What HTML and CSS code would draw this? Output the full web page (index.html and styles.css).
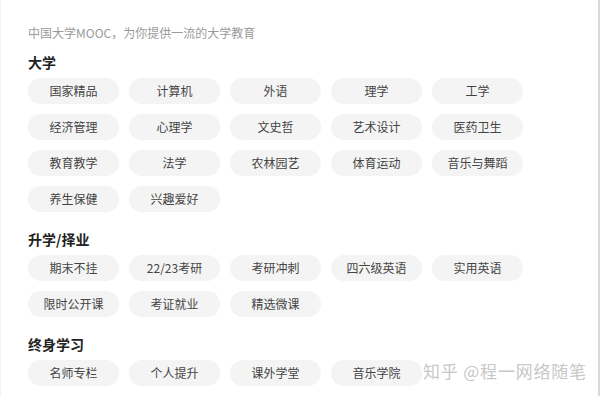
FILE: index.html
```html
<!DOCTYPE html>
<html lang="zh-CN">
<head>
<meta charset="utf-8">
<title>中国大学MOOC</title>
<link rel="stylesheet" href="styles.css">
</head>
<body>
<div class="page">
  <p class="intro">中国大学MOOC，为你提供一流的大学教育</p>

  <section class="group">
    <h2 class="group-title">大学</h2>
    <ul class="tags">
      <li class="tag">国家精品</li>
      <li class="tag">计算机</li>
      <li class="tag">外语</li>
      <li class="tag">理学</li>
      <li class="tag">工学</li>
      <li class="tag">经济管理</li>
      <li class="tag">心理学</li>
      <li class="tag">文史哲</li>
      <li class="tag">艺术设计</li>
      <li class="tag">医药卫生</li>
      <li class="tag">教育教学</li>
      <li class="tag">法学</li>
      <li class="tag">农林园艺</li>
      <li class="tag">体育运动</li>
      <li class="tag">音乐与舞蹈</li>
      <li class="tag">养生保健</li>
      <li class="tag">兴趣爱好</li>
    </ul>
  </section>

  <section class="group">
    <h2 class="group-title">升学/择业</h2>
    <ul class="tags">
      <li class="tag">期末不挂</li>
      <li class="tag">22/23考研</li>
      <li class="tag">考研冲刺</li>
      <li class="tag">四六级英语</li>
      <li class="tag">实用英语</li>
      <li class="tag">限时公开课</li>
      <li class="tag">考证就业</li>
      <li class="tag">精选微课</li>
    </ul>
  </section>

  <section class="group">
    <h2 class="group-title">终身学习</h2>
    <ul class="tags">
      <li class="tag">名师专栏</li>
      <li class="tag">个人提升</li>
      <li class="tag">课外学堂</li>
      <li class="tag">音乐学院</li>
    </ul>
  </section>

  <div class="watermark">知乎 @程一网络随笔</div>
</div>
</body>
</html>
```

FILE: styles.css
```css
* { box-sizing: border-box; }

html, body {
  margin: 0;
  padding: 0;
  background: #ffffff;
}

body {
  font-family: "Noto Sans CJK SC", "Noto Sans", sans-serif;
  color: #333333;
}

.page {
  position: relative;
  width: 600px;
  height: 396px;
  overflow: hidden;
  padding: 25px 0 0 27px;
  border-left: 1px solid #f2f2f2;
  border-right: 2px solid #d9d9d9;
}

.intro {
  margin: 0;
  font-size: 12px;
  line-height: 16px;
  color: #9a9a9a;
}

.group {
  margin-bottom: 17px;
}

.group-title {
  margin: 11px 0 6px 0;
  font-size: 14px;
  line-height: 20px;
  font-weight: 700;
  color: #222222;
}

.group + .group .group-title {
  margin-top: 0;
}

.tags {
  list-style: none;
  margin: 0;
  padding: 0;
  display: grid;
  grid-template-columns: repeat(5, 91px);
  column-gap: 10px;
  row-gap: 10px;
}

.tag {
  height: 26px;
  line-height: 26px;
  border-radius: 13px;
  background: #f4f4f4;
  text-align: center;
  font-size: 12px;
  color: #444444;
}

.watermark {
  position: absolute;
  left: 422px;
  top: 360px;
  font-size: 17px;
  line-height: 22px;
  color: #c8c8c8;
  letter-spacing: 0.8px;
  text-shadow: 0 0 1px #ffffff;
  white-space: nowrap;
}
```
